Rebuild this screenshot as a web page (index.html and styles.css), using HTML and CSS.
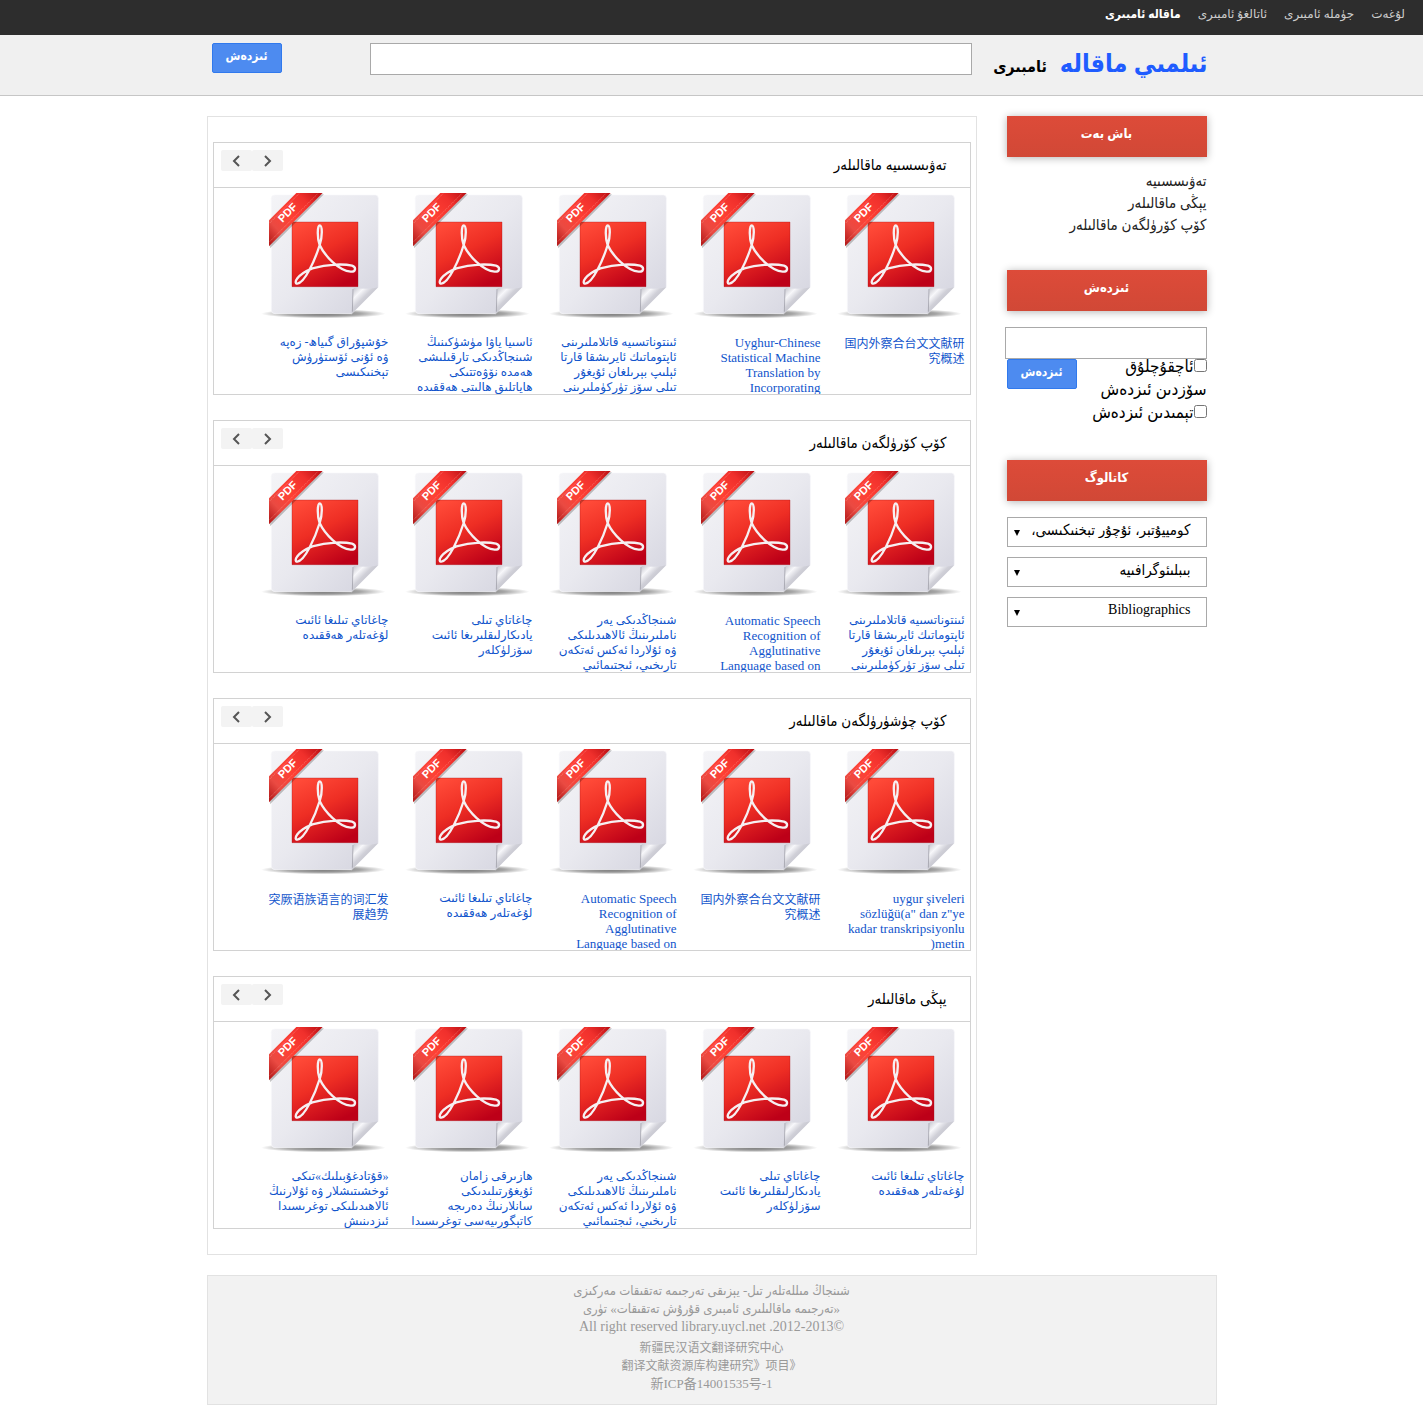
FILE: index.html
```
<!DOCTYPE html>
<html lang="ug" dir="rtl">
<head>
<meta charset="utf-8">
<title>ئىلمىي ماقالە ئامبىرى</title>
<link rel="stylesheet" href="styles.css">
</head>
<body>
<svg class="defs" aria-hidden="true">
  <defs>
    <linearGradient id="paper" x1="0" y1="0" x2="1" y2="1"><stop offset="0" stop-color="#f4f4f7"/><stop offset=".5" stop-color="#e9e9ef"/><stop offset="1" stop-color="#d3d3de"/></linearGradient>
    <linearGradient id="tile" x1="0.2" y1="0" x2=".7" y2="1"><stop offset="0" stop-color="#ff4a38"/><stop offset=".45" stop-color="#ee2e24"/><stop offset="1" stop-color="#bd0018"/></linearGradient>
    <linearGradient id="ribbon" gradientUnits="userSpaceOnUse" x1="42" y1="170" x2="200" y2="20"><stop offset="0" stop-color="#b81d1c"/><stop offset=".2" stop-color="#ea4a42"/><stop offset=".45" stop-color="#ff4034"/><stop offset=".75" stop-color="#f0302c"/><stop offset="1" stop-color="#b80d12"/></linearGradient>
    <linearGradient id="curl" x1="0" y1="0" x2="1" y2="1"><stop offset="0" stop-color="#b9b9c2"/><stop offset=".25" stop-color="#f7f7fa"/><stop offset=".42" stop-color="#d0d0d8"/><stop offset=".6" stop-color="#c2c2cb"/></linearGradient>
    <radialGradient id="floor"><stop offset="0" stop-color="#000" stop-opacity=".6"/><stop offset=".6" stop-color="#000" stop-opacity=".35"/><stop offset="1" stop-color="#000" stop-opacity="0"/></radialGradient>
    <g id="pdf">
      <ellipse cx="205" cy="386" rx="187" ry="14" fill="url(#floor)"/>
      <path d="M60 30H361Q370 30 370 40V306L290 386H60Q49 386 49 375V40Q49 30 60 30Z" fill="url(#paper)" stroke="#f8f8fa" stroke-width="2"/>
      <path d="M370 306Q350 314 296 309Q293 350 290 386Z" fill="url(#curl)"/>
      <path d="M294 312L292 380" stroke="#9a9aa4" stroke-width="3" opacity=".7"/>
      <path d="M111 111H309V305H111Z" fill="url(#tile)" stroke="#a31016" stroke-width="1"/>
      <path d="M194 180C186 158 187 121 194 121C202 121 203 154 194 180C181 222 150 294 127 296C115 296 123 270 172 250C220 236 270 237 291 242C305 247 302 261 287 260C252 257 209 213 194 180Z" fill="none" stroke="#f6f0f2" stroke-width="7" stroke-linejoin="round"/>
      <path d="M125 24H204L42 186V107Z" fill="#000" opacity=".22" transform="translate(3 4)"/>
      <path d="M124 24H203L42 184V106Z" fill="url(#ribbon)"/>
      <path d="M188 26L43 171M132 26L43 115" stroke="#ffb0a5" stroke-width="1.5" stroke-dasharray="4 2" opacity=".8"/>
      <text x="97" y="94" transform="rotate(-45 97 82)" text-anchor="middle" direction="ltr" class="pdf-tag">PDF</text>
    </g>
  </defs>
</svg>

<nav class="topbar">
  <a href="#">لۇغەت</a>
  <a href="#">جۈملە ئامبىرى</a>
  <a href="#">ئاتالغۇ ئامبىرى</a>
  <a href="#" class="current">ماقالە ئامبىرى</a>
</nav>

<header class="header">
  <form class="header-inner">
    <a class="logo" href="#"><span class="logo-main">ئىلمىي ماقالە</span><span class="logo-sub">ئامبىرى</span></a>
    <input class="field header-field" type="text" aria-label="ئىزدەش">
    <button class="btn" type="button">ئىزدەش</button>
  </form>
</header>

<div class="page">
  <div class="columns">
    <aside class="sidebar">
      <section>
        <h2 class="side-title">باش بەت</h2>
        <ul class="side-links">
          <li><a href="#">تەۋىسسىيە</a></li>
          <li><a href="#">يېڭى ماقالىلەر</a></li>
          <li><a href="#">كۆپ كۆرۈلگەن ماقالىلەر</a></li>
        </ul>
      </section>
      <section>
        <h2 class="side-title">ئىزدەش</h2>
        <form class="side-search">
          <input class="field side-field" type="text" aria-label="ئىزدەش">
          <div class="side-row">
            <div class="checks">
              <label><input type="checkbox">ئاچقۇچلۇق<br>سۆزدىن ئىزدەش</label>
              <label><input type="checkbox">تېمىدىن ئىزدەش</label>
            </div>
            <button class="btn" type="button">ئىزدەش</button>
          </div>
        </form>
      </section>
      <section>
        <h2 class="side-title">كاتالوگ</h2>
        <div class="selects">
          <select aria-label="كومپيۇتېر"><option>كومپيۇتېر، ئۇچۇر تېخنىكىسى،</option></select>
          <select aria-label="بىبلىئوگرافىيە"><option>بىبلىئوگرافىيە</option></select>
          <select aria-label="Bibliographics" class="latin-select"><option>Bibliographics</option></select>
        </div>
      </section>
    </aside>

    <main class="main">
      <section class="shelf">
        <div class="shelf-head"><h2>تەۋىسسىيە ماقالىلەر</h2><div class="pager"><button type="button" aria-label="كېيىنكى"><svg viewBox="0 0 31 21"><path d="M13 6L18 11L13 16"/></svg></button><button type="button" aria-label="ئالدىنقى"><svg viewBox="0 0 31 21"><path d="M18 6L13 11L18 16"/></svg></button></div></div>
        <div class="items">
          <a class="item cjk" href="#"><svg viewBox="42 9 360 432"><use href="#pdf"/></svg><span>国内外察合台文文献研<br>究概述</span></a>
          <a class="item latin" href="#"><svg viewBox="42 9 360 432"><use href="#pdf"/></svg><span>Uyghur-Chinese<br>Statistical Machine<br>Translation by<br>Incorporating</span></a>
          <a class="item" href="#"><svg viewBox="42 9 360 432"><use href="#pdf"/></svg><span>ئىنتوناتسىيە قاتلاملىرىنى<br>ئاپتوماتىك ئايرىشقا قارتا<br>ئېلىپ بېرىلغان ئۇيغۇر<br>تىلى سۆز تۈركۈملىرىنى</span></a>
          <a class="item" href="#"><svg viewBox="42 9 360 432"><use href="#pdf"/></svg><span>ئاسىيا ياۋا مۈشۈكىنىڭ<br>شىنجاڭدىكى تارقىلىشى<br>ھەمدە نۆۋەتتىكى<br>ھاياتلىق ھالىتى ھەققىدە</span></a>
          <a class="item" href="#"><svg viewBox="42 9 360 432"><use href="#pdf"/></svg><span>خۇشپۇراق گىياھ- زەپە<br>ۋە ئۇنى ئۆستۈرۈش<br>تېخنىكىسى</span></a>
        </div>
      </section>

      <section class="shelf">
        <div class="shelf-head"><h2>كۆپ كۆرۈلگەن ماقالىلەر</h2><div class="pager"><button type="button" aria-label="كېيىنكى"><svg viewBox="0 0 31 21"><path d="M13 6L18 11L13 16"/></svg></button><button type="button" aria-label="ئالدىنقى"><svg viewBox="0 0 31 21"><path d="M18 6L13 11L18 16"/></svg></button></div></div>
        <div class="items">
          <a class="item" href="#"><svg viewBox="42 9 360 432"><use href="#pdf"/></svg><span>ئىنتوناتسىيە قاتلاملىرىنى<br>ئاپتوماتىك ئايرىشقا قارتا<br>ئېلىپ بېرىلغان ئۇيغۇر<br>تىلى سۆز تۈركۈملىرىنى</span></a>
          <a class="item latin" href="#"><svg viewBox="42 9 360 432"><use href="#pdf"/></svg><span>Automatic Speech<br>Recognition of<br>Agglutinative<br>Language based on</span></a>
          <a class="item" href="#"><svg viewBox="42 9 360 432"><use href="#pdf"/></svg><span>شىنجاڭدىكى يەر<br>ناملىرىنىڭ ئالاھىدىلىكى<br>ۋە ئۇلاردا ئەكس ئەتكەن<br>تارىخىي، ئىجتىمائىي</span></a>
          <a class="item" href="#"><svg viewBox="42 9 360 432"><use href="#pdf"/></svg><span>چاغاتاي تىلى<br>يادىكارلىقلىرىغا ئائىت<br>سۆزلۈكلەر</span></a>
          <a class="item" href="#"><svg viewBox="42 9 360 432"><use href="#pdf"/></svg><span>چاغاتاي تىلىغا ئائىت<br>لۇغەتلەر ھەققىدە</span></a>
        </div>
      </section>

      <section class="shelf">
        <div class="shelf-head"><h2>كۆپ چۈشۈرۈلگەن ماقالىلەر</h2><div class="pager"><button type="button" aria-label="كېيىنكى"><svg viewBox="0 0 31 21"><path d="M13 6L18 11L13 16"/></svg></button><button type="button" aria-label="ئالدىنقى"><svg viewBox="0 0 31 21"><path d="M18 6L13 11L18 16"/></svg></button></div></div>
        <div class="items">
          <a class="item latin" href="#"><svg viewBox="42 9 360 432"><use href="#pdf"/></svg><span>uygur şiveleri<br>sözlüğü(a" dan z"ye<br>kadar transkripsiyonlu<br>metin(</span></a>
          <a class="item cjk" href="#"><svg viewBox="42 9 360 432"><use href="#pdf"/></svg><span>国内外察合台文文献研<br>究概述</span></a>
          <a class="item latin" href="#"><svg viewBox="42 9 360 432"><use href="#pdf"/></svg><span>Automatic Speech<br>Recognition of<br>Agglutinative<br>Language based on</span></a>
          <a class="item" href="#"><svg viewBox="42 9 360 432"><use href="#pdf"/></svg><span>چاغاتاي تىلىغا ئائىت<br>لۇغەتلەر ھەققىدە</span></a>
          <a class="item cjk" href="#"><svg viewBox="42 9 360 432"><use href="#pdf"/></svg><span>突厥语族语言的词汇发<br>展趋势</span></a>
        </div>
      </section>

      <section class="shelf">
        <div class="shelf-head"><h2>يېڭى ماقالىلەر</h2><div class="pager"><button type="button" aria-label="كېيىنكى"><svg viewBox="0 0 31 21"><path d="M13 6L18 11L13 16"/></svg></button><button type="button" aria-label="ئالدىنقى"><svg viewBox="0 0 31 21"><path d="M18 6L13 11L18 16"/></svg></button></div></div>
        <div class="items">
          <a class="item" href="#"><svg viewBox="42 9 360 432"><use href="#pdf"/></svg><span>چاغاتاي تىلىغا ئائىت<br>لۇغەتلەر ھەققىدە</span></a>
          <a class="item" href="#"><svg viewBox="42 9 360 432"><use href="#pdf"/></svg><span>چاغاتاي تىلى<br>يادىكارلىقلىرىغا ئائىت<br>سۆزلۈكلەر</span></a>
          <a class="item" href="#"><svg viewBox="42 9 360 432"><use href="#pdf"/></svg><span>شىنجاڭدىكى يەر<br>ناملىرىنىڭ ئالاھىدىلىكى<br>ۋە ئۇلاردا ئەكس ئەتكەن<br>تارىخىي، ئىجتىمائىي</span></a>
          <a class="item" href="#"><svg viewBox="42 9 360 432"><use href="#pdf"/></svg><span>ھازىرقى زامان<br>ئۇيغۇرتىلىدىكى<br>سانلارنىڭ دەرىجە<br>كاتېگورىيەسى توغرىسىدا</span></a>
          <a class="item" href="#"><svg viewBox="42 9 360 432"><use href="#pdf"/></svg><span>«قۇتادغۇبىلىك»تىكى<br>ئوخشىتىشلار ۋە ئۇلارنىڭ<br>ئالاھىدىلىكى توغرىسىدا<br>ئىزدىنىش</span></a>
        </div>
      </section>
    </main>
  </div>

  <footer class="footer">
    <p>شىنجاڭ مىللەتلەر تىل- يېزىقى تەرجىمە تەتقىقات مەركىزى<br>«تەرجىمە ماقالىلىرى ئامبىرى قۇرۇش تەتقىقات» تۈرى<br><span class="copy">©2012-2013. All right reserved library.uycl.net</span></p>
    <p class="zh">新疆民汉语文翻译研究中心<br>《<bdi dir="ltr">翻译文献资源库构建研究》项目</bdi><br><span class="icp">新ICP备14001535号-1</span></p>
  </footer>
</div>
</body>
</html>
```
FILE: styles.css
```
* { box-sizing: border-box; }

body {
  margin: 0;
  background: #fff;
  color: #000;
  font-family: "Liberation Serif", "DejaVu Sans Condensed", "DejaVu Sans", "Noto Sans CJK SC", serif;
  font-size: 15px;
}

h2, p, ul { margin: 0; padding: 0; }
ul { list-style: none; }
a { color: inherit; text-decoration: none; }
button, input, select { margin: 0; font-family: inherit; }

.defs { position: absolute; width: 0; height: 0; }
.pdf-tag { font: bold 33px "Liberation Sans", sans-serif; fill: #fff; }

/* Top navigation */
.topbar {
  display: flex;
  gap: 17px;
  height: 35px;
  padding: 0 18px;
  background: #2d2d2d;
  color: #ccc;
  font-family: "Liberation Serif", "DejaVu Sans", serif;
  font-size: 12px;
  line-height: 28px;
}
.topbar .current {
  color: #fff;
  font-family: "Liberation Serif", "DejaVu Sans Condensed", serif;
  font-weight: bold;
}

/* Header */
.header {
  height: 61px;
  background: #f0f0f0;
  border-bottom: 1px solid #c6c6c6;
}
.header-inner {
  display: flex;
  max-width: 1010px;
  margin: 0 auto;
  padding: 8px 9px 0 5px;
}
.logo {
  flex: 0 0 236px;
  display: flex;
  align-items: baseline;
  gap: 13px;
  font-weight: bold;
  line-height: 42px;
  white-space: nowrap;
}
.logo-main { color: #1f5cff; font-size: 25px; }
.logo-sub { font-size: 16px; }
.field {
  height: 32px;
  padding: 0 8px;
  border: 1px solid #a9a9a9;
  background: #fff;
}
.header-field { flex: 0 1 602px; min-width: 0; }
.btn {
  flex: none;
  width: 70px;
  height: 30px;
  padding: 0 0 4px;
  border: 1px solid #3079ed;
  border-radius: 2px;
  background: #4d8bf0;
  color: #fff;
  font-size: 12px;
  font-weight: bold;
}
.header .btn { margin-right: auto; }

/* Page columns */
.page { max-width: 1010px; margin: 20px auto 0; }
.columns { display: flex; align-items: flex-start; gap: 30px; padding-right: 10px; }

.sidebar { flex: 0 0 200px; min-width: 0; }
.side-title {
  height: 41px;
  background: linear-gradient(#dd4b39, #d14836);
  box-shadow: 0 1px 8px rgba(0, 0, 0, .3);
  color: #fff;
  font-size: 13px;
  line-height: 35px;
  text-align: center;
}
.side-links { padding: 13px 0 34px; color: #222; line-height: 22px; }
.side-search { height: 149px; padding-top: 16px; }
.side-field { display: block; width: 202px; }
.side-row { display: flex; justify-content: space-between; }
.checks { margin-top: -4px; font-size: 17px; line-height: 23px; white-space: nowrap; }
.checks label { display: block; }
.checks input { width: 13px; height: 13px; vertical-align: 0; }
.selects { display: grid; gap: 10px; padding-top: 16px; }
select {
  appearance: none;
  width: 100%;
  height: 30px;
  padding: 0 15px 5px 20px;
  border: 1px solid #a9a9a9;
  border-radius: 0;
  background: #fff url("data:image/svg+xml,%3Csvg xmlns='http://www.w3.org/2000/svg' width='6' height='6'%3E%3Cpath d='M0 0h6L3 6z'/%3E%3C/svg%3E") no-repeat 6px 12px;
  color: #000;
  font-size: 15px;
}
.latin-select { font-size: 14px; }

/* Article shelves */
.main {
  flex: 1;
  min-width: 0;
  padding: 0 5px 25px;
  border: 1px solid #e2e2e2;
}
.shelf {
  height: 253px;
  margin-top: 25px;
  border: 1px solid #d2d2d2;
  overflow: hidden;
}
.shelf-head {
  display: flex;
  justify-content: space-between;
  height: 45px;
  padding: 7px 23px 0 7px;
  border-bottom: 1px solid #d2d2d2;
}
.shelf-head h2 { font-size: 15px; font-weight: normal; line-height: 30px; }
.pager { display: flex; }
.pager button {
  width: 31px;
  height: 21px;
  padding: 0;
  border: 0;
  border-radius: 2px;
  background: #f3f3f3;
}
.pager svg { display: block; width: 31px; height: 21px; fill: none; stroke: #555; stroke-width: 2; }
.items { display: flex; gap: 24px; padding-right: 5px; }
.item {
  flex: none;
  width: 120px;
  color: #15c;
  font-family: "Liberation Serif", "DejaVu Sans", "Noto Sans CJK SC", serif;
  font-size: 12px;
  line-height: 15px;
  white-space: nowrap;
}
.item svg { display: block; width: 120px; height: 144px; margin-bottom: 3px; overflow: visible; }
.item span { display: block; }
.item.latin { font-size: 13px; }
.item.cjk span { padding-top: 2px; }

/* Footer */
.footer {
  height: 130px;
  margin-top: 20px;
  padding-top: 6px;
  border: 1px solid #e2e2e2;
  background: #f2f2f2;
  color: #999;
  font-size: 13px;
  line-height: 18px;
  text-align: center;
}
.footer .copy { font-size: 14px; }
.footer .zh { margin-top: 3px; font-size: 12px; }
.footer .icp { font-size: 13px; }
```
